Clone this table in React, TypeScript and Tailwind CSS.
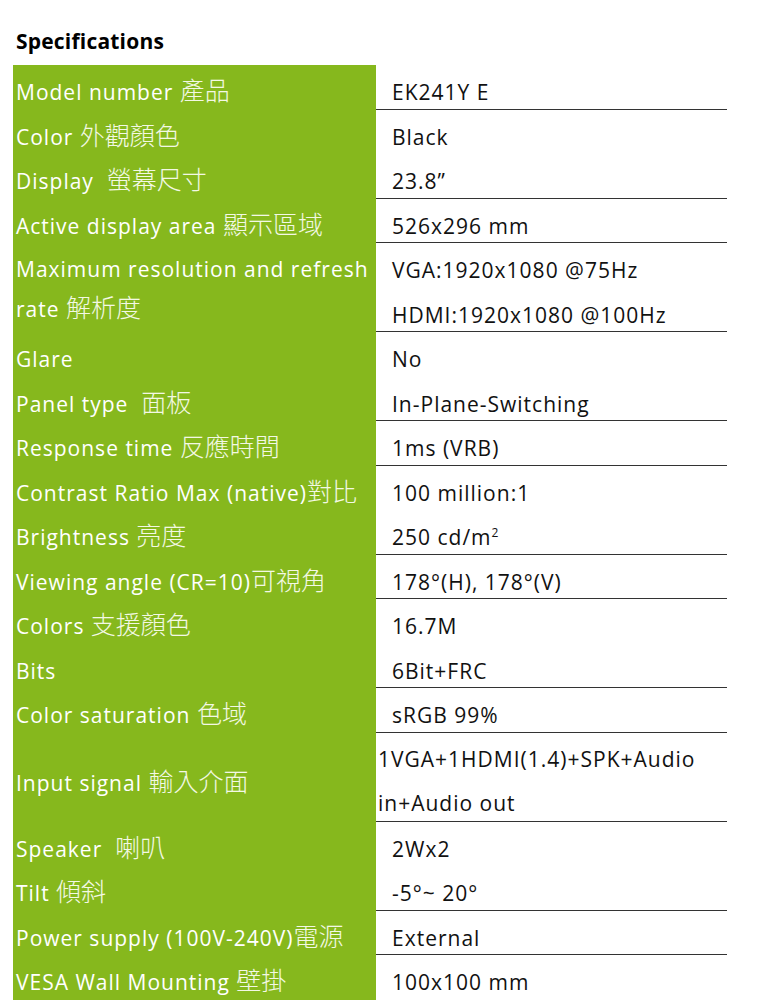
import type { ReactNode } from 'react'

const green = 'bg-[#86b81d]'

function C({ children }: { children: ReactNode }) {
  return (
    <span className="font-['Noto_Sans_CJK_TC','Noto_Sans_CJK_SC',sans-serif] font-light text-[25px] tracking-normal leading-none text-[#f3f8e4]">
      {children}
    </span>
  )
}

type Row = {
  label: ReactNode[]
  value: ReactNode[]
  line?: boolean
  tall?: boolean
  labelClass?: string
  valueClass?: string
}

const rows: Row[] = [
  { label: [<>Model number <C>產品</C></>], value: ['EK241Y E'], line: true },
  { label: [<>Color <C>外觀顏色</C></>], value: ['Black'] },
  { label: [<>Display&nbsp; <C>螢幕尺寸</C></>], value: ['23.8”'], line: true },
  { label: [<>Active display area <C>顯示區域</C></>], value: ['526x296 mm'], line: true },
  {
    label: ['Maximum resolution and refresh', <>rate <C>解析度</C></>],
    value: ['VGA:1920x1080 @75Hz', 'HDMI:1920x1080 @100Hz'],
    line: true,
    tall: true,
    labelClass: 'pt-[6px] leading-[40px]',
  },
  { label: ['Glare'], value: ['No'] },
  { label: [<>Panel type&nbsp; <C>面板</C></>], value: ['In-Plane-Switching'], line: true },
  { label: [<>Response time <C>反應時間</C></>], value: ['1ms (VRB)'], line: true },
  { label: [<>Contrast Ratio Max (native)<C>對比</C></>], value: ['100 million:1'] },
  {
    label: [<>Brightness <C>亮度</C></>],
    value: [<>250 cd/m<sup className="text-[12px] -top-[8px]">2</sup></>],
    line: true,
  },
  { label: [<>Viewing angle (CR=10)<C>可視角</C></>], value: ['178°(H), 178°(V)'], line: true },
  { label: [<>Colors <C>支援顏色</C></>], value: ['16.7M'] },
  { label: ['Bits'], value: ['6Bit+FRC'], line: true },
  { label: [<>Color saturation <C>色域</C></>], value: ['sRGB 99%'], line: true },
  {
    label: [<>Input signal <C>輸入介面</C></>],
    value: ['1VGA+1HDMI(1.4)+SPK+Audio', 'in+Audio out'],
    line: true,
    tall: true,
    labelClass: 'pt-[28px] leading-[44.5px]',
    valueClass: 'pl-[2px] pt-[4px]',
  },
  { label: [<>Speaker&nbsp; <C>喇叭</C></>], value: ['2Wx2'] },
  { label: [<>Tilt <C>傾斜</C></>], value: ['-5°~ 20°'], line: true },
  { label: [<>Power supply (100V-240V)<C>電源</C></>], value: ['External'], line: true },
  { label: [<>VESA Wall Mounting <C>壁掛</C></>], value: ['100x100 mm'] },
]

export default function App() {
  return (
    <main className="min-h-screen bg-white font-['Open_Sans',sans-serif] text-[21px] tracking-[1px]">
      <div className="h-[65px] pt-[27px] pl-[16px]">
        <h1 className="font-bold text-[21px] leading-[28px] tracking-[0.2px] text-black">Specifications</h1>
      </div>

      <div className="ml-[13px] w-[714px]">
        {rows.map((row, i) => (
          <div
            key={i}
            className={`grid grid-cols-[363px_351px] ${row.tall ? 'h-[89px]' : 'h-[44.5px]'} ${
              row.line ? 'border-b border-[#333]' : ''
            }`}
          >
            <div className={`${green} text-white pl-[3px] whitespace-nowrap ${row.labelClass ?? 'pt-[5px] leading-[44.5px]'}`}>
              {row.label.map((l, j) => (
                <div key={j}>{l}</div>
              ))}
            </div>
            <div className={`text-[#111] whitespace-nowrap leading-[44.5px] ${row.valueClass ?? 'pl-[16px] pt-[5px]'}`}>
              {row.value.map((v, j) => (
                <div key={j}>{v}</div>
              ))}
            </div>
          </div>
        ))}
      </div>
    </main>
  )
}
